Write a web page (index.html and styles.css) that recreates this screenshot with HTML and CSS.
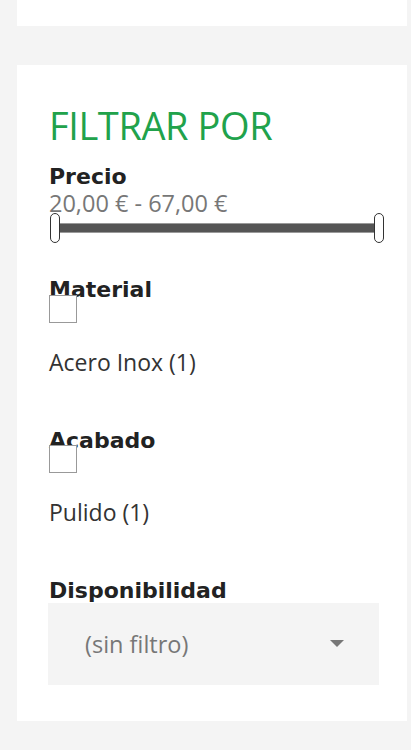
FILE: index.html
```html
<!DOCTYPE html>
<html lang="es">
<head>
<meta charset="utf-8">
<title>Filtrar por</title>
<link rel="stylesheet" href="styles.css">
</head>
<body>
<div class="top-card"></div>
<aside class="card">
  <h2 class="title">FILTRAR POR</h2>

  <section class="group group-price">
    <h3 class="group-title">Precio</h3>
    <div class="price-range">20,00 € - 67,00 €</div>
    <div class="slider">
      <span class="handle"></span>
      <span class="track"></span>
      <span class="handle"></span>
    </div>
  </section>

  <section class="group group-check first">
    <h3 class="group-title">Material</h3>
    <label class="option">
      <span class="box"></span>
      <span class="option-text">Acero Inox (1)</span>
    </label>
  </section>

  <section class="group group-check">
    <h3 class="group-title">Acabado</h3>
    <label class="option">
      <span class="box"></span>
      <span class="option-text">Pulido (1)</span>
    </label>
  </section>

  <section class="group group-select">
    <h3 class="group-title">Disponibilidad</h3>
    <div class="select">
      <span class="select-text">(sin filtro)</span>
      <span class="caret"></span>
    </div>
  </section>
</aside>
</body>
</html>
```
FILE: styles.css
```css
* { box-sizing: border-box; }

html, body {
  margin: 0;
  padding: 0;
  background: #f4f4f4;
}

body {
  font-family: "Open Sans", "Noto Sans", sans-serif;
  color: #333;
}

.top-card {
  height: 26px;
  margin: 0 4px 0 17px;
  background: #fff;
}

.card {
  margin: 39px 4px 0 17px;
  padding: 40px 28px 36px 31px;
  background: #fff;
}

.title {
  margin: 0;
  font-family: "Open Sans", sans-serif;
  font-weight: 400;
  font-size: 38px;
  line-height: 40px;
  color: #21a24b;
  letter-spacing: -0.4px;
  padding-left: 1px;
}

.group-title {
  margin: 0;
  font-family: "DejaVu Sans", sans-serif;
  font-weight: 700;
  font-size: 22px;
  line-height: 17px;
  color: #222;
  padding-left: 1px;
}

.group-price { margin-top: 20px; }
.group-price .group-title { line-height: 24px; }

.price-range {
  margin-top: 4px;
  font-size: 23.5px;
  line-height: 21px;
  color: #777;
  padding-left: 1px;
}

.slider {
  display: flex;
  align-items: center;
  height: 31px;
  margin: -2px -5px 0 2px;
}

.handle {
  flex: none;
  width: 10px;
  height: 30px;
  border: 1.5px solid #333;
  border-radius: 5px;
  background: #fff;
}

.track {
  flex: 1;
  height: 10px;
  background: #555;
  border-top: 1.5px solid #9a9a9a;
  border-bottom: 1.5px solid #9a9a9a;
}

.group-check.first { margin-top: 38px; }
.group-check { margin-top: 57px; }

.option {
  display: flex;
  flex-direction: column;
  align-items: flex-start;
  margin-top: -3.5px;
}

.box {
  width: 28px;
  height: 28px;
  margin-left: 1px;
  border: 1.5px solid #999;
  background: #fff;
}

.option-text {
  margin-top: 26px;
  font-size: 23px;
  line-height: 26px;
  color: #333;
  padding-left: 1px;
}

.group-select { margin-top: 56.5px; }

.select {
  display: flex;
  align-items: center;
  justify-content: space-between;
  height: 82px;
  margin-top: 4px;
  padding: 0 35px 0 37px;
  background: #f4f4f4;
}

.select-text {
  font-size: 23.5px;
  color: #777;
}

.caret {
  width: 0;
  height: 0;
  border-left: 7px solid transparent;
  border-right: 7px solid transparent;
  border-top: 7px solid #777;
}
```
